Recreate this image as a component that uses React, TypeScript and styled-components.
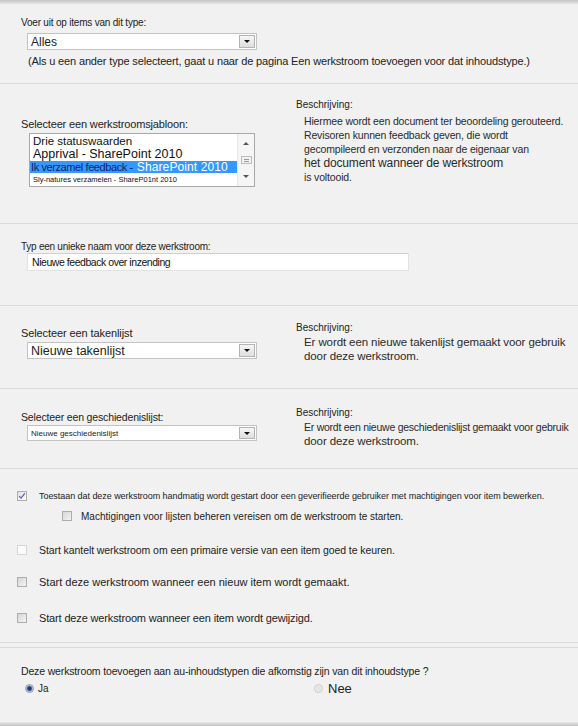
import React from "react";
import styled, { createGlobalStyle } from "styled-components";

const GlobalStyle = createGlobalStyle`
  html, body {
    margin: 0;
    padding: 0;
    background: #f1f1f1;
  }
  body {
    font-family: "Liberation Sans", Arial, sans-serif;
    color: #222;
  }
`;

const Page = styled.div`
  width: 578px;
  height: 726px;
  display: flex;
  flex-direction: column;
  background: #f1f1f1;
  overflow: hidden;
`;

const Edge = styled.div<{ $bottom?: boolean }>`
  flex: none;
  height: 4px;
  background: linear-gradient(
    ${(p) => (p.$bottom ? "to top" : "to bottom")},
    #c4c4c4,
    #e6e6e6
  );
`;

const Section = styled.section<{ $h: number; $pl?: number; $topLine?: boolean }>`
  flex: none;
  height: ${(p) => p.$h}px;
  padding-left: ${(p) => p.$pl ?? 21}px;
  border-bottom: ${(p) => (p.$topLine ? "none" : "1px solid #dadada")};
  border-top: ${(p) => (p.$topLine ? "1px solid #dadada" : "none")};
`;

const Gap = styled.div`
  flex: none;
  height: 4px;
`;

const TwoCols = styled.div`
  display: grid;
  grid-template-columns: 275px 1fr;
  align-items: start;
`;

const Column = styled.div<{ $pt: number }>`
  display: flex;
  flex-direction: column;
  align-items: flex-start;
  padding-top: ${(p) => p.$pt}px;
`;

const FieldLabel = styled.div<{ $size: number; $ls?: number }>`
  font-size: ${(p) => p.$size}px;
  letter-spacing: ${(p) => p.$ls ?? 0}px;
  line-height: 13px;
  white-space: nowrap;
`;

const HelpNote = styled.div`
  margin: 5px 0 0 7px;
  font-size: 11px;
  letter-spacing: -0.15px;
  line-height: 13px;
  white-space: nowrap;
`;

const DescTitle = styled.div`
  font-size: 10px;
  line-height: 12px;
  white-space: nowrap;
`;

const DescBody = styled.div<{ $mt: number }>`
  margin: ${(p) => p.$mt}px 0 0 8px;
  display: flex;
  flex-direction: column;
`;

const DescLine = styled.div<{ $size: number; $ls?: number }>`
  height: 14px;
  line-height: 14px;
  font-size: ${(p) => p.$size}px;
  letter-spacing: ${(p) => p.$ls ?? 0}px;
  color: #2a2a2a;
  white-space: nowrap;
`;

const Select = styled.div<{ $h: number; $mt: number }>`
  margin: ${(p) => p.$mt}px 0 0 6px;
  width: 230px;
  height: ${(p) => p.$h}px;
  box-sizing: border-box;
  display: flex;
  align-items: center;
  border: 1px solid #c3c3c3;
  background: #fff;
`;

const SelectValue = styled.span<{ $size: number }>`
  flex: 1;
  padding-left: 3px;
  font-size: ${(p) => p.$size}px;
  white-space: nowrap;
  overflow: hidden;
`;

const DropButton = styled.span`
  flex: none;
  width: 16px;
  height: calc(100% - 2px);
  margin-right: 1px;
  box-sizing: border-box;
  display: flex;
  align-items: center;
  justify-content: center;
  border: 1px solid #b4b4b4;
  background: linear-gradient(#f6f6f6, #dedede);

  &::after {
    content: "";
    border-left: 3px solid transparent;
    border-right: 3px solid transparent;
    border-top: 3px solid #111;
  }
`;

const ListBox = styled.div`
  margin: 2px 0 0 8px;
  width: 226px;
  height: 54px;
  box-sizing: border-box;
  display: flex;
  border: 1px solid #a8a8a8;
  background: #fff;
`;

const ListItems = styled.div`
  flex: 1;
  padding-top: 1px;
  display: flex;
  flex-direction: column;
  overflow: hidden;
`;

const ListItem = styled.div<{ $h: number; $size: number; $selected?: boolean }>`
  height: ${(p) => p.$h}px;
  line-height: ${(p) => p.$h}px;
  padding-left: ${(p) => (p.$selected ? 1 : 3)}px;
  font-size: ${(p) => p.$size}px;
  letter-spacing: ${(p) => (p.$selected ? -0.4 : 0)}px;
  color: ${(p) => (p.$selected ? "#14206a" : "#111")};
  background: ${(p) => (p.$selected ? "#3399ff" : "transparent")};
  white-space: nowrap;
  overflow: hidden;
`;

const SelectedTail = styled.span`
  margin-left: 4px;
  font-size: 12px;
  letter-spacing: 0.1px;
  color: #fff;
`;

const ScrollBar = styled.div`
  flex: none;
  width: 16px;
  padding-top: 8px;
  display: flex;
  flex-direction: column;
  align-items: center;
  border-left: 1px solid #e6e6e6;
  background: #f5f5f5;
`;

const ScrollArrow = styled.span<{ $down?: boolean; $mt: number }>`
  margin-top: ${(p) => p.$mt}px;
  border-left: 3px solid transparent;
  border-right: 3px solid transparent;
  ${(p) =>
    p.$down ? "border-top: 3px solid #555;" : "border-bottom: 3px solid #555;"}
`;

const ScrollThumb = styled.span`
  margin-top: 11px;
  width: 11px;
  height: 8px;
  box-sizing: border-box;
  border: 1px solid #bdbdbd;
  background: repeating-linear-gradient(
      #f3f3f3 0 1px,
      #9a9a9a 1px 2px
    )
    center / 5px 5px no-repeat,
    #f3f3f3;
`;

const NameInput = styled.input`
  margin: 0 0 0 6px;
  width: 382px;
  height: 18px;
  box-sizing: border-box;
  padding: 0 0 0 4px;
  border: 1px solid #e2e2e2;
  border-top-color: #d0d0d0;
  background: #fff;
  font-family: inherit;
  font-size: 10.5px;
  letter-spacing: -0.45px;
  color: #111;
  outline: none;
`;

const CheckList = styled.div`
  padding-top: 20px;
  display: flex;
  flex-direction: column;
`;

const CheckRow = styled.label<{ $mt?: number; $indent?: number }>`
  display: flex;
  align-items: center;
  height: 14px;
  margin-top: ${(p) => p.$mt ?? 0}px;
  padding-left: ${(p) => p.$indent ?? 0}px;
`;

type BoxState = "checked" | "unchecked" | "faint";

const Box = styled.span<{ $state: BoxState }>`
  flex: none;
  width: 10px;
  height: 10px;
  box-sizing: border-box;
  display: flex;
  align-items: center;
  justify-content: center;
  border: 1px solid
    ${(p) => (p.$state === "faint" ? "#d6d6d6" : "#adadad")};
  background: ${(p) =>
    p.$state === "faint"
      ? "#fbfbfb"
      : p.$state === "checked"
      ? "linear-gradient(135deg, #e0e0e6, #fdfdfd)"
      : "linear-gradient(135deg, #d6d6d6, #f4f4f4)"};
`;

const CheckText = styled.span<{ $gap: number; $size: number; $ls?: number }>`
  margin-left: ${(p) => p.$gap}px;
  font-size: ${(p) => p.$size}px;
  letter-spacing: ${(p) => p.$ls ?? 0}px;
  white-space: nowrap;
`;

const RadioRow = styled.div`
  margin: 3px 0 0 4px;
  height: 14px;
  display: flex;
  align-items: center;
`;

const RadioOption = styled.label<{ $w?: number }>`
  display: flex;
  align-items: center;
  width: ${(p) => (p.$w ? `${p.$w}px` : "auto")};
`;

const RadioDot = styled.span<{ $on?: boolean }>`
  flex: none;
  width: 9px;
  height: 9px;
  box-sizing: border-box;
  border-radius: 50%;
  border: 1px solid ${(p) => (p.$on ? "#8c9bb3" : "#c9c9c9")};
  background: ${(p) =>
    p.$on
      ? "radial-gradient(circle, #1f3d6e 0 1.8px, #6d86ad 2.4px, #dfe6f0 3.6px)"
      : "radial-gradient(circle, #e4e4e4 0 2px, #f6f6f6 4px)"};
`;

const RadioText = styled.span<{ $size: number; $gap: number }>`
  margin-left: ${(p) => p.$gap}px;
  font-size: ${(p) => p.$size}px;
  white-space: nowrap;
`;

const Check = () => (
  <svg width="8" height="8" viewBox="0 0 8 8">
    <path d="M1.2 4.2 L3.1 6.2 L6.8 1.4" fill="none" stroke="#5a5ab8" strokeWidth="1.2" />
  </svg>
);

export default function App() {
  return (
    <>
      <GlobalStyle />
      <Page>
        <Edge />

        <Section $h={79}>
          <Column $pt={12}>
            <FieldLabel $size={10} $ls={-0.2}>
              Voer uit op items van dit type:
            </FieldLabel>
            <Select $h={17} $mt={4}>
              <SelectValue $size={12}>Alles</SelectValue>
              <DropButton />
            </Select>
            <HelpNote>
              (Als u een ander type selecteert, gaat u naar de pagina Een werkstroom toevoegen voor dat inhoudstype.)
            </HelpNote>
          </Column>
        </Section>

        <Section $h={139}>
          <TwoCols>
            <Column $pt={34}>
              <FieldLabel $size={11} $ls={-0.15}>
                Selecteer een werkstroomsjabloon:
              </FieldLabel>
              <ListBox>
                <ListItems>
                  <ListItem $h={13} $size={11.5}>Drie statuswaarden</ListItem>
                  <ListItem $h={13} $size={12.5}>Apprival - SharePoint 2010</ListItem>
                  <ListItem $h={12} $size={11} $selected>
                    Ik verzamel feedback -<SelectedTail>SharePoint 2010</SelectedTail>
                  </ListItem>
                  <ListItem $h={13} $size={7.5}>
                    Sly-natures verzamelen - ShareP01nt 2010
                  </ListItem>
                </ListItems>
                <ScrollBar>
                  <ScrollArrow $mt={0} />
                  <ScrollThumb />
                  <ScrollArrow $mt={11} $down />
                </ScrollBar>
              </ListBox>
            </Column>
            <Column $pt={15}>
              <DescTitle>Beschrijving:</DescTitle>
              <DescBody $mt={3}>
                <DescLine $size={10.5} $ls={-0.15}>
                  Hiermee wordt een document ter beoordeling gerouteerd.
                </DescLine>
                <DescLine $size={10.5} $ls={-0.15}>
                  Revisoren kunnen feedback geven, die wordt
                </DescLine>
                <DescLine $size={10.5} $ls={-0.15}>
                  gecompileerd en verzonden naar de eigenaar van
                </DescLine>
                <DescLine $size={12} $ls={-0.15}>
                  het document wanneer de werkstroom
                </DescLine>
                <DescLine $size={10.5} $ls={-0.15}>
                  is voltooid.
                </DescLine>
              </DescBody>
            </Column>
          </TwoCols>
        </Section>

        <Section $h={81}>
          <Column $pt={16}>
            <FieldLabel $size={10} $ls={-0.25}>
              Typ een unieke naam voor deze werkstroom:
            </FieldLabel>
            <NameInput readOnly value="Nieuwe feedback over inzending" />
          </Column>
        </Section>

        <Section $h={82}>
          <TwoCols>
            <Column $pt={21}>
              <FieldLabel $size={11} $ls={-0.1}>
                Selecteer een takenlijst
              </FieldLabel>
              <Select $h={17} $mt={2}>
                <SelectValue $size={12.5}>Nieuwe takenlijst</SelectValue>
                <DropButton />
              </Select>
            </Column>
            <Column $pt={16}>
              <DescTitle>Beschrijving:</DescTitle>
              <DescBody $mt={1}>
                <DescLine $size={11.5} $ls={-0.1}>
                  Er wordt een nieuwe takenlijst gemaakt voor gebruik
                </DescLine>
                <DescLine $size={11.5} $ls={-0.1}>
                  door deze werkstroom.
                </DescLine>
              </DescBody>
            </Column>
          </TwoCols>
        </Section>

        <Section $h={79}>
          <TwoCols>
            <Column $pt={22}>
              <FieldLabel $size={10.5} $ls={-0.15}>
                Selecteer een geschiedenislijst:
              </FieldLabel>
              <Select $h={16} $mt={1}>
                <SelectValue $size={8}>Nieuwe geschiedenislijst</SelectValue>
                <DropButton />
              </Select>
            </Column>
            <Column $pt={18}>
              <DescTitle>Beschrijving:</DescTitle>
              <DescBody $mt={1}>
                <DescLine $size={10.5} $ls={-0.25}>
                  Er wordt een nieuwe geschiedenislijst gemaakt voor gebruik
                </DescLine>
                <DescLine $size={11.5} $ls={-0.1}>
                  door deze werkstroom.
                </DescLine>
              </DescBody>
            </Column>
          </TwoCols>
        </Section>

        <Section $h={173} $pl={17}>
          <CheckList>
            <CheckRow>
              <Box $state="checked">
                <Check />
              </Box>
              <CheckText $gap={12} $size={9} $ls={-0.05}>
                Toestaan dat deze werkstroom handmatig wordt gestart door een geverifieerde gebruiker met machtigingen voor item bewerken.
              </CheckText>
            </CheckRow>
            <CheckRow $mt={6} $indent={45}>
              <Box $state="unchecked" />
              <CheckText $gap={9} $size={10}>
                Machtigingen voor lijsten beheren vereisen om de werkstroom te starten.
              </CheckText>
            </CheckRow>
            <CheckRow $mt={20}>
              <Box $state="faint" />
              <CheckText $gap={12} $size={10.5} $ls={-0.08}>
                Start kantelt werkstroom om een primaire versie van een item goed te keuren.
              </CheckText>
            </CheckRow>
            <CheckRow $mt={18}>
              <Box $state="unchecked" />
              <CheckText $gap={12} $size={11}>
                Start deze werkstroom wanneer een nieuw item wordt gemaakt.
              </CheckText>
            </CheckRow>
            <CheckRow $mt={22}>
              <Box $state="unchecked" />
              <CheckText $gap={12} $size={11} $ls={-0.15}>
                Start deze werkstroom wanneer een item wordt gewijzigd.
              </CheckText>
            </CheckRow>
          </CheckList>
        </Section>

        <Gap />

        <Section $h={74} $topLine>
          <Column $pt={17}>
            <FieldLabel $size={10.5} $ls={-0.15}>
              Deze werkstroom toevoegen aan au-inhoudstypen die afkomstig zijn van dit inhoudstype ?
            </FieldLabel>
          </Column>
          <RadioRow>
            <RadioOption $w={289}>
              <RadioDot $on />
              <RadioText $size={10} $gap={4}>Ja</RadioText>
            </RadioOption>
            <RadioOption>
              <RadioDot />
              <RadioText $size={13} $gap={5}>Nee</RadioText>
            </RadioOption>
          </RadioRow>
        </Section>

        <Edge $bottom />
      </Page>
    </>
  );
}
